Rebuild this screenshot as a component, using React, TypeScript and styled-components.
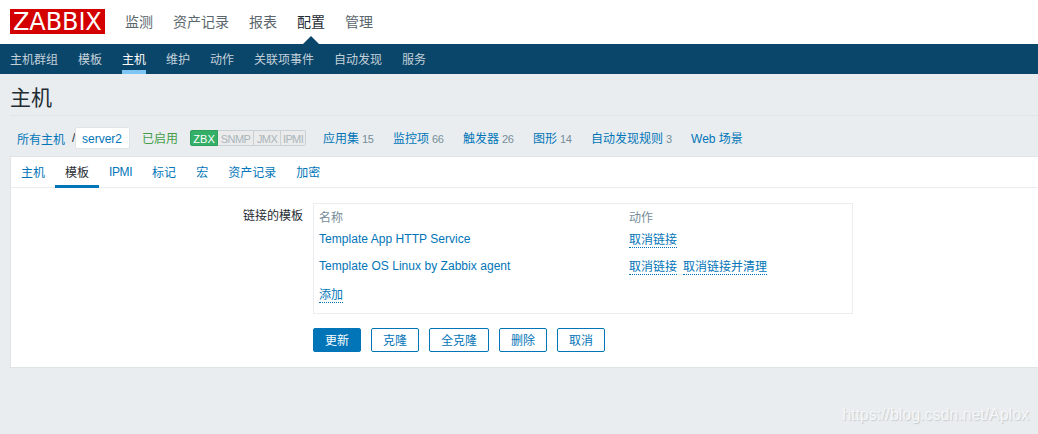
import React from "react";
import styled, { createGlobalStyle } from "styled-components";

const Global = createGlobalStyle`
  * { box-sizing: border-box; }
  body {
    margin: 0;
    background: #e9edf0;
    color: #1f2c33;
    font: 12px/16px "Liberation Sans", "Noto Sans CJK SC", sans-serif;
    overflow: hidden;
  }
`;

const Page = styled.div`
  position: relative;
  height: 434px;
  overflow: hidden;
`;

const Header = styled.header`
  display: flex;
  align-items: flex-start;
  height: 44px;
  padding-left: 10px;
  background: #fff;
`;

const Logo = styled.div`
  width: 95px;
  height: 25px;
  margin: 9px 20px 0 0;
  padding-left: 3px;
  background: #d40000;
  color: #fff;
  font: 24px/27px "DejaVu Sans", sans-serif;
  letter-spacing: -0.1px;
  white-space: nowrap;
`;

const MainNav = styled.nav`
  display: flex;
  gap: 20px;
  height: 44px;
`;

const MainItem = styled.a<{ $active?: boolean }>`
  position: relative;
  font-size: 14px;
  line-height: 44px;
  color: ${(p) => (p.$active ? "#1f2c33" : "#5a666d")};
  ${(p) =>
    p.$active &&
    `&::after {
      content: "";
      position: absolute;
      left: 50%;
      bottom: 0;
      margin-left: -8px;
      border: 8px solid transparent;
      border-top: 0;
      border-bottom-color: #0a466a;
    }`}
`;

const SubNav = styled.nav`
  display: flex;
  gap: 20px;
  height: 30px;
  padding-left: 10px;
  background: #0a466a;
`;

const SubItem = styled.a<{ $active?: boolean }>`
  height: 30px;
  line-height: 32px;
  color: ${(p) => (p.$active ? "#fff" : "#c3d1da")};
  box-shadow: ${(p) => (p.$active ? "inset 0 -4px #7ec5f4" : "none")};
`;

const Title = styled.h1`
  margin: 0 0 0 10px;
  height: 42px;
  border-bottom: 1px solid #dfe4e7;
  font-size: 21px;
  font-weight: 400;
  line-height: 47px;
`;

const Filter = styled.div`
  display: flex;
  align-items: center;
  height: 40px;
  padding: 4px 0 0 17px;
  white-space: nowrap;
`;

const Crumb = styled.a`
  padding-top: 3px;
  color: #0275b8;
`;

const Slash = styled.span`
  width: 3px;
  margin-left: 7px;
`;

const Selected = styled.a`
  height: 22px;
  width: 55px;
  padding-left: 6px;
  border: 1px solid #dfe4e7;
  border-radius: 2px;
  background: #fff;
  color: #0275b8;
  line-height: 22px;
`;

const Status = styled.span`
  margin: 0 12px;
  padding-top: 2px;
  color: #429e47;
`;

const Interfaces = styled.div`
  display: flex;
  width: 116px;
  height: 16px;
  margin-right: 17px;
`;

const Interface = styled.span<{ $on?: boolean; $w: number }>`
  width: ${(p) => p.$w}px;
  border: 1px solid ${(p) => (p.$on ? "#2f9f5e" : "#c8d1d6")};
  border-left-width: ${(p) => (p.$on ? 1 : 0)}px;
  background: ${(p) => (p.$on ? "#34af67" : "#ebebeb")};
  color: ${(p) => (p.$on ? "#fff" : "#a9b6bd")};
  font-size: 11px;
  letter-spacing: ${(p) => (p.$on ? 0 : -0.6)}px;
  line-height: 17px;
  text-align: center;
  &:first-child { border-radius: 2px 0 0 2px; }
  &:last-child { border-radius: 0 2px 2px 0; }
`;

const Count = styled.a<{ $w: number }>`
  width: ${(p) => p.$w}px;
  padding-top: 2px;
  color: #0275b8;
`;

const Num = styled.sup`
  margin-left: 3px;
  color: #768d99;
  font-size: 11px;
  letter-spacing: -0.3px;
  line-height: 1;
  vertical-align: baseline;
`;

const Panel = styled.main`
  height: 212px;
  margin-left: 10px;
  border: 1px solid #dfe4e7;
  border-right: 0;
  background: #fff;
`;

const Tabs = styled.div`
  display: flex;
  height: 31px;
  border-bottom: 1px solid #ebeef0;
`;

const Tab = styled.a<{ $active?: boolean; $latin?: boolean }>`
  height: 31px;
  padding: 0 10px;
  line-height: ${(p) => (p.$latin ? 30 : 32)}px;
  letter-spacing: ${(p) => (p.$latin ? -0.4 : 0)}px;
  color: ${(p) => (p.$active ? "#1f2c33" : "#0275b8")};
  box-shadow: ${(p) => (p.$active ? "inset 0 -3px #0275b8" : "none")};
`;

const Form = styled.div`
  display: grid;
  grid-template-columns: 292px 540px;
  column-gap: 10px;
  padding-top: 15px;
`;

const Label = styled.label`
  padding-top: 5px;
  text-align: right;
`;

const Templates = styled.div`
  display: grid;
  grid-template-columns: 310px 1fr;
  grid-template-rows: 18px 27px 28px 24px;
  height: 111px;
  padding: 5px;
  border: 1px solid #ebeef0;
`;

const Head = styled.div`
  padding-top: 1px;
  color: #768d99;
`;

const Cell = styled.div`
  display: flex;
  gap: 6px;
  align-items: flex-start;
  padding-top: 4px;
  color: #0275b8;
  letter-spacing: 0.04px;
`;

const Action = styled.a`
  height: 17px;
  border-bottom: 1px dotted #0275b8;
  letter-spacing: 0;
  line-height: 18px;
`;

const Buttons = styled.div`
  display: flex;
  grid-column: 2;
  gap: 10px;
  margin-top: 14px;
`;

const Button = styled.button<{ $primary?: boolean }>`
  height: 24px;
  padding: 2px 11px 0;
  border: 1px solid #0275b8;
  border-radius: 2px;
  background: ${(p) => (p.$primary ? "#0275b8" : "#fff")};
  color: ${(p) => (p.$primary ? "#fff" : "#0275b8")};
  font: inherit;
  line-height: 20px;
`;

const Watermark = styled.div`
  position: absolute;
  right: 9px;
  bottom: 9px;
  color: #f4f7f8;
  font-size: 16px;
  line-height: 20px;
  letter-spacing: -0.03px;
  text-shadow: 1px 1px 1px #c6cbce;
`;

const mainItems = ["监测", "资产记录", "报表", "配置", "管理"];
const subItems = ["主机群组", "模板", "主机", "维护", "动作", "关联项事件", "自动发现", "服务"];
const tabs = ["主机", "模板", "IPMI", "标记", "宏", "资产记录", "加密"];
const interfaces: [string, number][] = [["ZBX", 28], ["SNMP", 36], ["JMX", 27], ["IPMI", 25]];
const counts: [string, number, number][] = [
  ["应用集", 15, 70],
  ["监控项", 66, 70],
  ["触发器", 26, 70],
  ["图形", 14, 58],
  ["自动发现规则", 3, 100],
];
const buttons = ["更新", "克隆", "全克隆", "删除", "取消"];

export default function App() {
  return (
    <Page>
      <Global />
      <Header>
        <Logo>ZABBIX</Logo>
        <MainNav>
          {mainItems.map((t) => <MainItem key={t} $active={t === "配置"}>{t}</MainItem>)}
        </MainNav>
      </Header>
      <SubNav>
        {subItems.map((t) => <SubItem key={t} $active={t === "主机"}>{t}</SubItem>)}
      </SubNav>
      <Title>主机</Title>
      <Filter>
        <Crumb>所有主机</Crumb>
        <Slash>/</Slash>
        <Selected>server2</Selected>
        <Status>已启用</Status>
        <Interfaces>
          {interfaces.map(([t, w]) => <Interface key={t} $w={w} $on={t === "ZBX"}>{t}</Interface>)}
        </Interfaces>
        {counts.map(([t, n, w]) => <Count key={t} $w={w}>{t}<Num>{n}</Num></Count>)}
        <Count $w={60}>Web 场景</Count>
      </Filter>
      <Panel>
        <Tabs>
          {tabs.map((t) => <Tab key={t} $active={t === "模板"} $latin={t === "IPMI"}>{t}</Tab>)}
        </Tabs>
        <Form>
          <Label>链接的模板</Label>
          <Templates>
            <Head>名称</Head>
            <Head>动作</Head>
            <Cell>Template App HTTP Service</Cell>
            <Cell><Action>取消链接</Action></Cell>
            <Cell>Template OS Linux by Zabbix agent</Cell>
            <Cell><Action>取消链接</Action><Action>取消链接并清理</Action></Cell>
            <Cell><Action>添加</Action></Cell>
          </Templates>
          <Buttons>
            {buttons.map((t) => <Button key={t} $primary={t === "更新"}>{t}</Button>)}
          </Buttons>
        </Form>
      </Panel>
      <Watermark>https://blog.csdn.net/Aplox</Watermark>
    </Page>
  );
}
